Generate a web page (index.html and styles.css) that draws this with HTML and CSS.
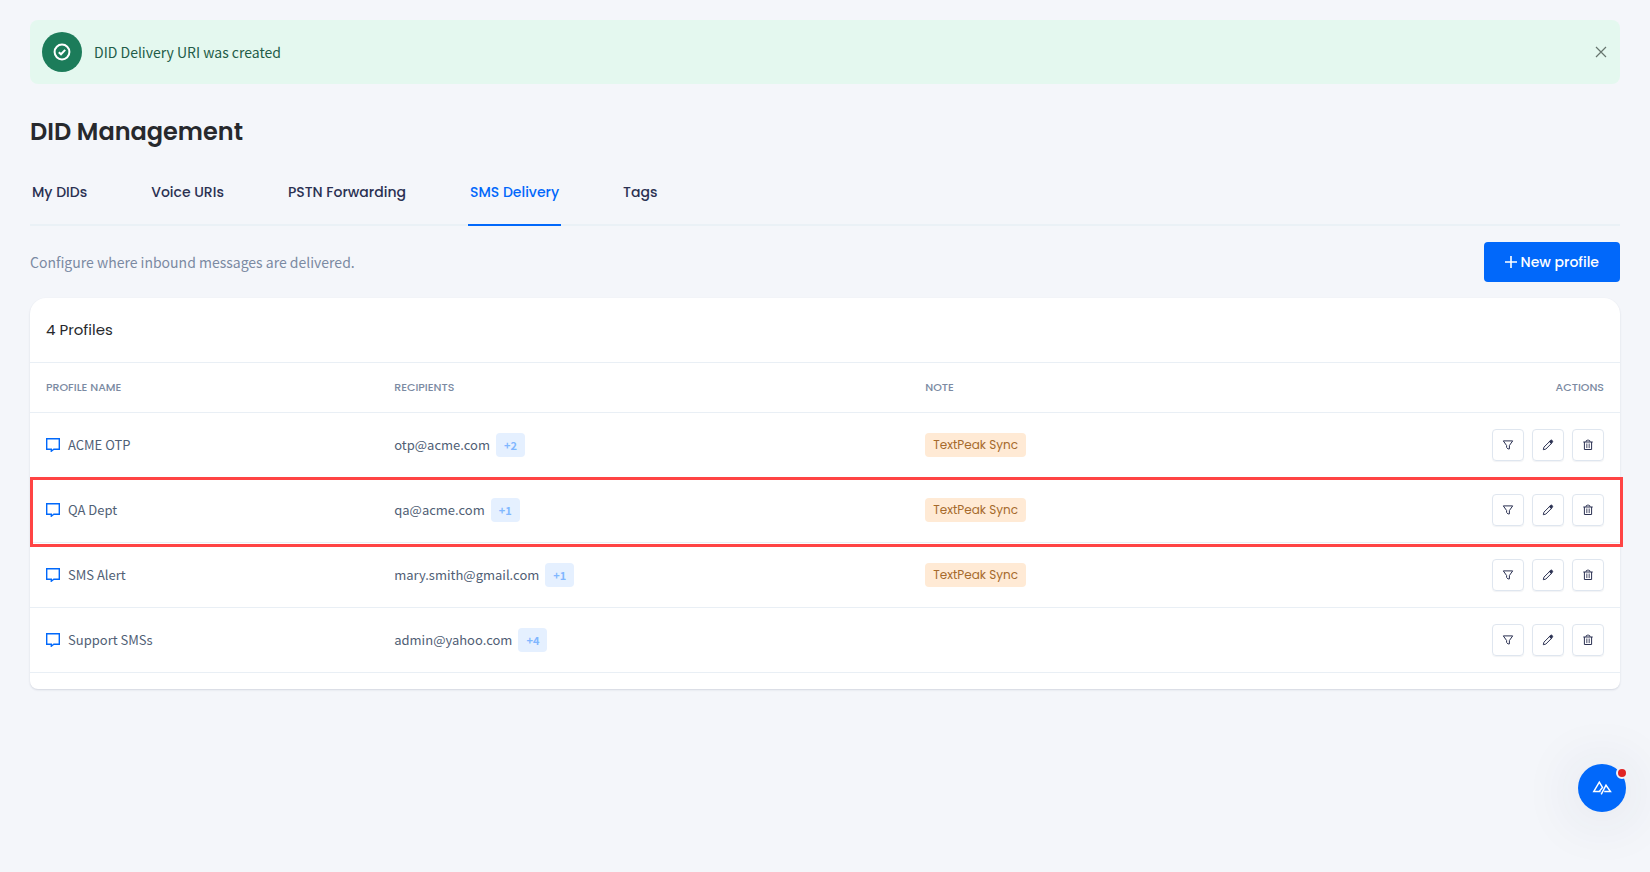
FILE: index.html
```
<!DOCTYPE html>
<html lang="en">
  <head>
    <meta charset="UTF-8" />
    <meta name="viewport" content="width=device-width, initial-scale=1.0" />
    <title>DID Management</title>
    <link rel="stylesheet" href="styles.css">
  </head>
  <body>
    <!-- Shared icons -->
    <svg class="icon-defs" aria-hidden="true">
      <symbol id="icon-chat" viewBox="1 1 14 14">
        <path d="M1.7 1.7h12.6v10.6H8.8L6.3 14.2v-1.9H1.7z" />
      </symbol>
      <symbol id="icon-filter" viewBox="0 0 12 12">
        <path d="M1.3 1.9h9.4L7.4 6.5v3.4H6L4.6 8.5v-2z" />
      </symbol>
      <symbol id="icon-edit" viewBox="0 0 12 12">
        <path d="M1.3 10.7l.6-2.5 5.7-5.7 1.9 1.9-5.7 5.7z" />
        <path class="solid" d="M7.3 2.6l1.2-1.2q.9-.7 1.7.1.9.9.1 1.8L9.3 4.5z" />
      </symbol>
      <symbol id="icon-trash" viewBox="0 0 12 12">
        <path d="M1.3 3h9.4M2.4 3v7.5h7.2V3M4 2.8q0-1.6 1.3-1.6h1.4Q8 1.2 8 2.8" />
        <path class="thin" d="M4.5 4.5v4.6M6 4.5v4.6M7.5 4.5v4.6" />
      </symbol>
    </svg>

    <main class="page">
      <div class="alert" role="status">
        <span class="alert-icon">
          <svg viewBox="0 0 18 18" aria-hidden="true">
            <circle cx="9" cy="9" r="7.4" />
            <path d="M5.8 9.2L8 11.3l4.2-4.4" />
          </svg>
        </span>
        <p class="alert-text">DID Delivery URI was created</p>
        <button class="alert-close" type="button" aria-label="Close">
          <svg viewBox="0 0 12 12" aria-hidden="true"><path d="M1 1l10 10M11 1L1 11" /></svg>
        </button>
      </div>

      <h1>DID Management</h1>

      <nav class="tabs">
        <a href="#">My DIDs</a>
        <a href="#">Voice URIs</a>
        <a href="#">PSTN Forwarding</a>
        <a href="#" class="active">SMS Delivery</a>
        <a href="#">Tags</a>
      </nav>

      <div class="toolbar">
        <p>Configure where inbound messages are delivered.</p>
        <button class="btn-primary" type="button">
          <svg viewBox="0 0 12 12" aria-hidden="true"><path d="M6 0v12M0 6h12" /></svg>
          New profile
        </button>
      </div>

      <!-- Profiles table -->
      <section class="card">
        <h2>4 Profiles</h2>
        <table>
          <thead>
            <tr>
              <th class="col-name">Profile name</th>
              <th class="col-recipients">Recipients</th>
              <th>Note</th>
              <th class="col-actions">Actions</th>
            </tr>
          </thead>
          <tbody>
            <tr>
              <td><span class="name"><svg><use href="#icon-chat" /></svg>ACME OTP</span></td>
              <td><span class="recipient">otp@acme.com <span class="count">+2</span></span></td>
              <td><span class="tag">TextPeak Sync</span></td>
              <td>
                <div class="actions">
                  <button type="button" aria-label="Filter"><svg><use href="#icon-filter" /></svg></button>
                  <button type="button" aria-label="Edit"><svg><use href="#icon-edit" /></svg></button>
                  <button type="button" aria-label="Delete"><svg><use href="#icon-trash" /></svg></button>
                </div>
              </td>
            </tr>
            <tr class="highlight">
              <td><span class="name"><svg><use href="#icon-chat" /></svg>QA Dept</span></td>
              <td><span class="recipient">qa@acme.com <span class="count">+1</span></span></td>
              <td><span class="tag">TextPeak Sync</span></td>
              <td>
                <div class="actions">
                  <button type="button" aria-label="Filter"><svg><use href="#icon-filter" /></svg></button>
                  <button type="button" aria-label="Edit"><svg><use href="#icon-edit" /></svg></button>
                  <button type="button" aria-label="Delete"><svg><use href="#icon-trash" /></svg></button>
                </div>
              </td>
            </tr>
            <tr>
              <td><span class="name"><svg><use href="#icon-chat" /></svg>SMS Alert</span></td>
              <td><span class="recipient">mary.smith@gmail.com <span class="count">+1</span></span></td>
              <td><span class="tag">TextPeak Sync</span></td>
              <td>
                <div class="actions">
                  <button type="button" aria-label="Filter"><svg><use href="#icon-filter" /></svg></button>
                  <button type="button" aria-label="Edit"><svg><use href="#icon-edit" /></svg></button>
                  <button type="button" aria-label="Delete"><svg><use href="#icon-trash" /></svg></button>
                </div>
              </td>
            </tr>
            <tr>
              <td><span class="name"><svg><use href="#icon-chat" /></svg>Support SMSs</span></td>
              <td><span class="recipient">admin@yahoo.com <span class="count">+4</span></span></td>
              <td></td>
              <td>
                <div class="actions">
                  <button type="button" aria-label="Filter"><svg><use href="#icon-filter" /></svg></button>
                  <button type="button" aria-label="Edit"><svg><use href="#icon-edit" /></svg></button>
                  <button type="button" aria-label="Delete"><svg><use href="#icon-trash" /></svg></button>
                </div>
              </td>
            </tr>
          </tbody>
        </table>
      </section>
    </main>

    <!-- Floating help button -->
    <button class="fab" type="button" aria-label="Help">
      <svg viewBox="0 0 20 16" aria-hidden="true">
        <path d="M8.6 11.4H1.8L7.3 2.2l3.2 5.2-3.2 4M9.2 14.4L14 5.2l4.4 6.2h-6.2" />
      </svg>
      <span class="fab-dot"></span>
    </button>
  </body>
</html>
```
FILE: styles.css
```
/* Global Styles */
* {
  margin: 0;
  padding: 0;
  box-sizing: border-box;
}

body {
  font-family: "Noto Sans CJK SC", sans-serif;
  font-size: 14px;
  line-height: 24px;
  color: #506075;
  background: #f4f6fa;
}

button {
  font: inherit;
  border: none;
  background: none;
  cursor: pointer;
}

svg {
  display: block;
  fill: none;
  stroke: currentColor;
}

.icon-defs {
  position: absolute;
  width: 0;
  height: 0;
}

.page {
  padding: 20px 30px;
}

/* Alert */
.alert {
  display: flex;
  align-items: center;
  gap: 12px;
  padding: 12px;
  background: #e4f8ef;
  border-radius: 8px;
}

.alert-icon {
  display: flex;
  align-items: center;
  justify-content: center;
  width: 40px;
  height: 40px;
  border-radius: 50%;
  background: #1c7c5a;
  color: #fff;
}

.alert-icon svg {
  width: 18px;
  height: 18px;
  stroke-width: 2;
}

.alert-text {
  flex: 1;
  color: #235c48;
}

.alert-close {
  padding: 1px;
  color: #66756e;
}

.alert-close svg {
  width: 12px;
  height: 12px;
  stroke-width: 1.2;
}

/* Heading and tabs */
h1 {
  margin-top: 32px;
  font: 600 24px/32px "Poppins", "Inter", sans-serif;
  color: #27292d;
}

.tabs {
  display: flex;
  gap: 60px;
  margin-top: 28px;
  border-bottom: 2px solid #eaf1f6;
}

.tabs a {
  padding: 4px 2px 20px;
  margin-bottom: -2px;
  font: 500 14px/24px "Poppins", "Inter", sans-serif;
  color: #2b3152;
  text-decoration: none;
  border-bottom: 2px solid transparent;
}

.tabs a.active {
  color: #0168fa;
  border-bottom-color: #0168fa;
}

/* Toolbar */
.toolbar {
  display: flex;
  align-items: center;
  justify-content: space-between;
  margin: 16px 0;
  color: #7b8aa2;
}

.btn-primary {
  display: flex;
  align-items: center;
  gap: 4px;
  height: 40px;
  padding: 0 21px;
  font: 500 14px/24px "Poppins", "Inter", sans-serif;
  color: #fff;
  background: #0168fa;
  border-radius: 4px;
}

.btn-primary svg {
  width: 12px;
  height: 12px;
  stroke-width: 1.6;
}

/* Card */
.card {
  padding-bottom: 16px;
  background: #fff;
  border-radius: 16px 16px 8px 8px;
  box-shadow: 0 1px 2px rgba(40, 50, 90, 0.16);
}

.card h2 {
  padding: 20px 16px;
  font: 400 15px/24px "Poppins", "Inter", sans-serif;
  color: #27292d;
}

/* Table */
table {
  width: 100%;
  border-collapse: separate;
  border-spacing: 0;
  table-layout: fixed;
}

th {
  height: 51px;
  padding: 0 16px 2px;
  font: 500 11px/16px "Poppins", "Inter", sans-serif;
  text-align: left;
  text-transform: uppercase;
  color: #7b8aa2;
  border-top: 1px solid #e9eff5;
  border-bottom: 1px solid #e9eff5;
}

td {
  height: 65px;
  padding: 0 16px;
  font-size: 13px;
  border-bottom: 1px solid #e9eff5;
}

.col-name {
  width: 21.9%;
}

.col-recipients {
  width: 33.4%;
}

.col-actions {
  text-align: right;
}

.name {
  display: flex;
  align-items: center;
  gap: 8px;
}

.name svg {
  width: 14px;
  height: 14px;
  color: #0168fa;
  stroke-width: 1.4;
}

.recipient {
  display: flex;
  align-items: center;
  gap: 6px;
}

.count,
.tag {
  display: block;
  width: fit-content;
  padding: 0 8px;
  border-radius: 4px;
}

.count {
  font-size: 11px;
  font-weight: 700;
  color: #80b7ff;
  background: #e5f0ff;
}

.tag {
  font-family: "Poppins", "Inter", sans-serif;
  font-size: 12px;
  color: #a66a2c;
  background: #ffead5;
}

.actions {
  display: flex;
  justify-content: flex-end;
  gap: 8px;
}

.actions button {
  display: flex;
  align-items: center;
  justify-content: center;
  width: 32px;
  height: 32px;
  color: #2b3152;
  border: 1px solid #dfe6ef;
  border-radius: 4px;
  box-shadow: 0 1px 1px rgba(40, 50, 90, 0.06);
}

.actions svg {
  width: 12px;
  height: 12px;
}

.solid {
  fill: currentColor;
}

.thin {
  stroke-width: 0.6;
}

/* Marked row */
.highlight {
  position: relative;
}

.highlight td:last-child::after {
  content: "";
  position: absolute;
  inset: -1px -3px -4px 0;
  border: 3px solid #ff4444;
  pointer-events: none;
}

/* Floating button */
.fab {
  position: fixed;
  right: 24px;
  bottom: 60px;
  display: flex;
  align-items: center;
  justify-content: center;
  width: 48px;
  height: 48px;
  color: #fff;
  background: #0168fa;
  border-radius: 50%;
  box-shadow: 0 4px 60px rgba(40, 50, 90, 0.14);
}

.fab svg {
  width: 20px;
  height: 16px;
  stroke-width: 1.5;
}

.fab-dot {
  position: absolute;
  top: 3px;
  right: -2px;
  width: 12px;
  height: 12px;
  background: #e02424;
  border: 2px solid #f1f3f8;
  border-radius: 50%;
}
```
